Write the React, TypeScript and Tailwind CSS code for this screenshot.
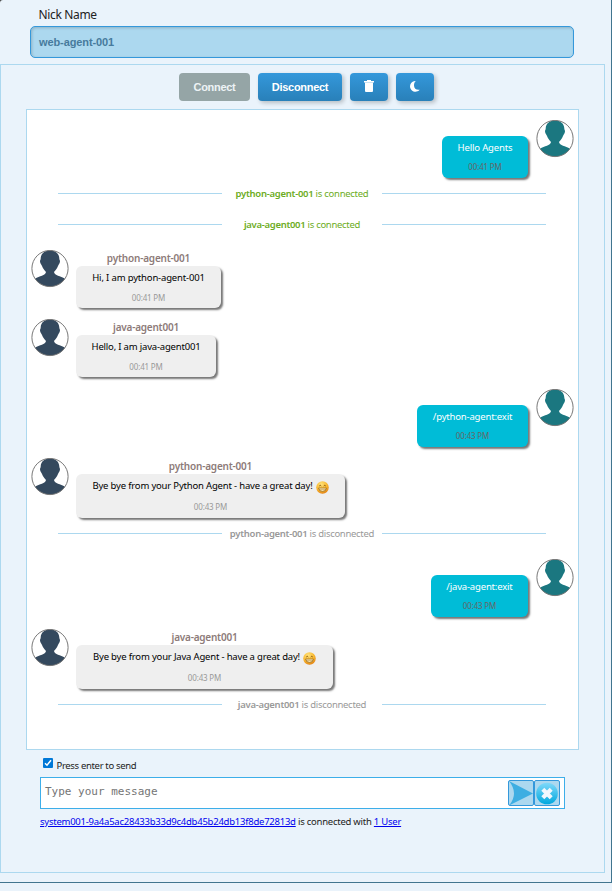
import React from "react";

function Avatar({ color }: { color: string }) {
  return (
    <svg className="block h-[38px] w-[38px] shrink-0" viewBox="0 0 38 38">
      <circle cx="19" cy="18.500" r="18.100" fill="#fff" />
      <path
        fill={color}
        d="M19 .6C24.500 .6 28.200 3.800 28.300 8.500c0 1.200.7 1.600.7 2.800 0 2-1.300 3-1.900 4.500-.9 2.400-2.200 4.300-4.100 6.300.6 3.600 6.500 4 11 6.600C31 33.500 25.500 36.500 19 36.500S7 33.500 4 28.700c4.500-2.600 10.400-3 11-6.600-1.900-2-3.200-3.900-4.100-6.300C10.300 14.300 9 13.300 9 11.300c0-1.200.7-1.600.7-2.800C9.800 3.800 13.500.6 19 .6Z"
      />
      <circle cx="19" cy="18.500" r="18.100" fill="none" stroke="#777" strokeWidth="1" />
    </svg>
  );
}

function Smile() {
  return (
    <svg className="ml-[3px] block h-[13px] w-[13px] shrink-0 translate-y-[2px]" viewBox="0 0 26 26">
      <defs>
        <radialGradient id="face" cx=".4" cy=".25" r=".8">
          <stop offset="0" stopColor="#ffe27a" />
          <stop offset=".6" stopColor="#f8b62d" />
          <stop offset="1" stopColor="#e07c10" />
        </radialGradient>
      </defs>
      <circle cx="13" cy="13" r="12.500" fill="url(#face)" />
      <path d="M6.500 10q2-3 4 0M15.500 10q2-3 4 0" fill="none" stroke="#8a5a10" strokeWidth="2" />
      <path d="M5 14h16q-1 7-8 7t-8-7Z" fill="#fff0c0" stroke="#9a6410" strokeWidth="1.500" />
      <path d="M6 17.500h14" stroke="#9a6410" strokeWidth="1" />
    </svg>
  );
}

type Msg = { text: string; time: string; width: string; spacing: string; gap: string };

function Sent({ text, time, width, spacing, gap }: Msg) {
  return (
    <div className={`flex justify-end pr-[4px] ${gap}`}>
      <div className={`mt-4 flex h-[42px] flex-col items-center rounded-[6px] bg-[#00bcd7] shadow-[2px_2px_2px_#777] ${width}`}>
        <div className={`mt-[5px] whitespace-nowrap text-[9.500px] leading-[14px] text-white ${spacing}`}>{text}</div>
        <div className="mt-[7px] whitespace-nowrap text-[8px] leading-[10px] tracking-[-0.170px] text-[#666]">{time}</div>
      </div>
      <div className="ml-[7px]"><Avatar color="#1b7780" /></div>
    </div>
  );
}

function Received({ name, nameSpacing, text, time, width, spacing, gap, smile }: Msg & { name: string; nameSpacing: string; smile?: boolean }) {
  return (
    <div className={`flex pl-[3.500px] ${gap}`}>
      <Avatar color="#34495e" />
      <div className={`ml-[7.500px] flex flex-col items-center ${width}`}>
        <div className={`h-4 whitespace-nowrap text-[10px] leading-4 font-semibold text-[#8d7b79] ${nameSpacing}`}>{name}</div>
        <div className={`flex w-full flex-col items-center rounded-[6px] bg-[#efefef] shadow-[2px_2px_2px_#777] ${smile ? "h-[44px]" : "h-[42px]"}`}>
          <div className="mt-[5px] flex h-[14px]">
            <span className={`whitespace-nowrap text-[9.500px] leading-[14px] text-black ${spacing}`}>{text}</span>
            {smile && <Smile />}
          </div>
          <div className={`whitespace-nowrap text-[8px] leading-[10px] tracking-[-0.170px] text-[#999] ${smile ? "mt-[9px]" : "mt-[8px]"}`}>{time}</div>
        </div>
      </div>
    </div>
  );
}

function Status({ name, state, color, spacing }: { name: string; state: string; color: string; spacing: string }) {
  return (
    <div className="flex h-[31px] items-center pr-8 pl-[31px]">
      <div className="h-px w-[164px] bg-[#acd8ef]" />
      <div className={`w-[160px] text-center text-[9.500px] leading-[14px] whitespace-nowrap ${color} ${spacing}`}>
        <b className="font-semibold">{name}</b> {state}
      </div>
      <div className="h-px w-[164px] bg-[#acd8ef]" />
    </div>
  );
}

const blueButton =
  "flex h-7 items-center justify-center rounded-[4px] bg-linear-to-b from-[#3498db] to-[#2980b9] shadow-[2px_2px_4px_rgba(0,0,0,0.22)]";

export default function App() {
  return (
    <div className="h-[891px] w-[612px] overflow-hidden bg-[#eaf3fb] font-['Noto_Sans','Open_Sans',sans-serif]">
      <div className="h-[883px] w-[612px] rounded-tl-[3px] border-r border-b border-[#41758f] shadow-[-2px_-2px_0_1px_#444]">
        <div className="flex h-[64px] flex-col pl-[30px]">
          <label className="mt-[7px] h-[19px] pl-[8.500px] text-[12px] leading-[16px] tracking-[-0.350px] text-[#222]">Nick Name</label>
          <div className="flex h-8 w-[544px] items-center rounded-[5px] border border-[#3498db] bg-[#acd8ef] pl-2 font-['Liberation_Sans',sans-serif] text-[11px] font-bold tracking-[-0.100px] text-[#477b9d] shadow-[inset_1px_1px_3px_rgba(0,0,0,0.18)]">
            web-agent-001
          </div>
        </div>

        <main className="h-[809px] w-[605px] border border-[#acd8ef]">
          <div className="ml-[178px] flex h-[44px] gap-2 pt-2 font-['Liberation_Sans',sans-serif] text-[11px] font-bold tracking-[-0.300px] text-white">
            <button className="flex h-7 w-[71px] items-center justify-center rounded-[4px] bg-[#95a5a6] text-[#edf3f5]">Connect</button>
            <button className={`${blueButton} w-[84px]`}>Disconnect</button>
            <button className={`${blueButton} w-[38px]`}>
              <svg className="-mt-[3px] h-3 w-[10px]" viewBox="0 0 10 12" fill="white">
                <path d="M0 1h3V0h4v1h3v1.500H0ZM1 2.800h8V11q0 1-1 1H2q-1 0-1-1Z" />
              </svg>
            </button>
            <button className={`${blueButton} w-[38px]`}>
              <svg className="-mt-[2px] h-[11px] w-[10px]" viewBox="0 0 10 11" fill="white">
                <path d="M5.800 0A5.400 5.400 0 1 0 9.700 8.700C6.500 9.400 4 7.300 4 4.400 4 2.500 4.700 1 5.800 0Z" />
              </svg>
            </button>
          </div>

          <section className="ml-[25px] h-[641px] w-[553px] border border-[#acd8ef] bg-white">
            <Sent text="Hello Agents" time="00:41 PM" width="mr-px w-[86px]" spacing="tracking-[-0.150px]" gap="mt-[10px]" />
            <Status name="python-agent-001" state="is connected" color="text-[#6cac23]" spacing="tracking-[-0.270px]" />
            <Status name="java-agent001" state="is connected" color="text-[#6cac23]" spacing="tracking-[-0.300px]" />
            <Received name="python-agent-001" nameSpacing="tracking-[-0.200px]" text="Hi, I am python-agent-001" time="00:41 PM" width="w-[145px]" spacing="tracking-[-0.160px]" gap="mt-[10px]" />
            <Received name="java-agent001" nameSpacing="tracking-[-0.220px]" text="Hello, I am java-agent001" time="00:41 PM" width="w-[140px]" spacing="tracking-[-0.190px]" gap="mt-[11px]" />
            <Sent text="/python-agent:exit" time="00:43 PM" width="mr-px w-[111px]" spacing="tracking-[-0.170px]" gap="mt-[12px]" />
            <Received name="python-agent-001" nameSpacing="tracking-[-0.200px]" text="Bye bye from your Python Agent - have a great day!" time="00:43 PM" width="w-[269px]" spacing="tracking-[-0.180px]" gap="mt-[11px]" smile />
            <Status name="python-agent-001" state="is disconnected" color="text-[#999]" spacing="tracking-[-0.290px]" />
            <Sent text="/java-agent:exit" time="00:43 PM" width="mr-px w-[97px]" spacing="tracking-[-0.170px]" gap="mt-[10px]" />
            <Received name="java-agent001" nameSpacing="tracking-[-0.220px]" text="Bye bye from your Java Agent - have a great day!" time="00:43 PM" width="w-[257px]" spacing="tracking-[-0.180px]" gap="mt-[12px]" smile />
            <Status name="java-agent001" state="is disconnected" color="text-[#999]" spacing="tracking-[-0.290px]" />
          </section>

          <div className="ml-[42px] flex h-[27px] pt-2">
            <svg className="h-[10px] w-[10px]" viewBox="0 0 10 10">
              <rect width="10" height="10" rx="1" fill="#0078d7" />
              <path d="m2 5.200 2 2 4-5" fill="none" stroke="#fff" strokeWidth="1.500" />
            </svg>
            <span className="ml-[3.500px] whitespace-nowrap text-[9.500px] leading-[16px] tracking-[-0.330px] text-[#222]">Press enter to send</span>
          </div>

          <div className="ml-[39px] flex h-8 w-[525px] border border-[#3daee9] bg-white">
            <div className="w-[467px] pt-[5px] pl-[4px] font-['DejaVu_Sans_Mono',monospace] text-[11px] leading-[18px] text-[#757575]">Type your message</div>
            <button className="mt-[2px] h-[26px] w-[26px] rounded-[2px] border border-[#3498db] bg-[#acd8ef]">
              <svg className="block h-6 w-6" viewBox="0 0 24 24">
                <path d="M0 0 24 12.500 0 24.500Q10 12.500 0 0Z" fill="#3daee2" />
              </svg>
            </button>
            <button className="mt-[2px] h-[26px] w-[26px] rounded-[2px] border border-[#3498db] bg-[#acd8ef]">
              <svg className="block h-6 w-6" viewBox="0 0 24 24">
                <defs>
                  <linearGradient id="close" x1="0" y1="0" x2="0" y2="1">
                    <stop stopColor="#80d9fa" />
                    <stop offset="1" stopColor="#00a8de" />
                  </linearGradient>
                </defs>
                <circle cx="12" cy="12.500" r="10.800" fill="url(#close)" />
                <path d="m7.800 8.300 8.400 8.400m0-8.400-8.400 8.400" stroke="#f2f7fd" strokeWidth="4.200" />
              </svg>
            </button>
          </div>
          <p className="ml-[39px] pt-[5px] text-[9.500px] leading-[16px] tracking-[-0.240px] whitespace-nowrap text-[#222]">
            <a className="text-[#0000ee] underline">system001-9a4a5ac28433b33d9c4db45b24db13f8de72813d</a> is connected with <a className="text-[#0000ee] underline">1 User</a>
          </p>
        </main>
      </div>
    </div>
  );
}
